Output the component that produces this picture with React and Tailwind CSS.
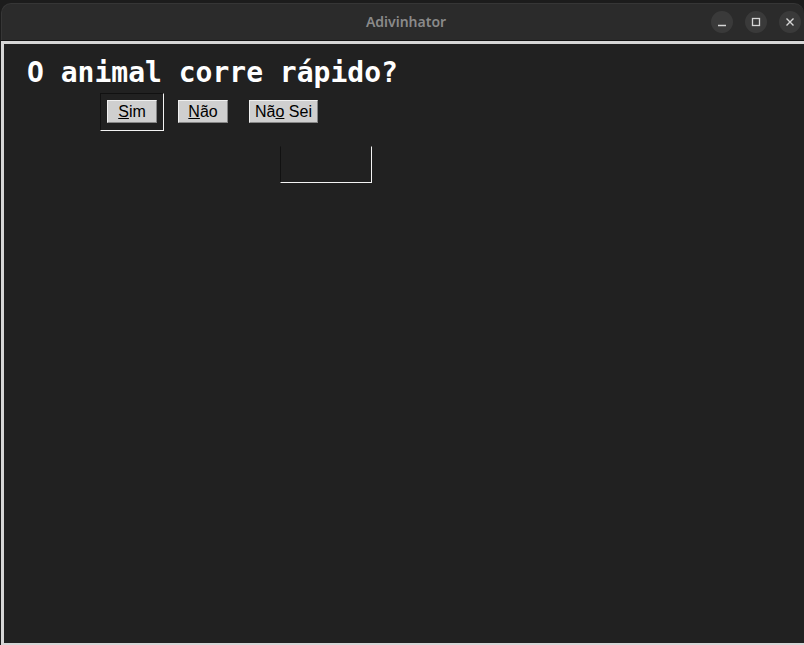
export default function App() {
  return (
    <div className="w-[804px] h-[645px] bg-[#1c1c1c] overflow-hidden flex flex-col">
      {/* Header bar */}
      <div className="mt-[3px] ml-[1px] h-[37px] shrink-0 rounded-t-[10px] bg-[#2b2b2b] border-t border-l border-[#363636] relative flex items-center justify-center">
        <span className="font-['Noto_Sans'] font-semibold text-[14px] text-[#8a8a8a] ml-[6px] -mt-[2px]">Adivinhator</span>
        <div className="absolute right-[3px] top-[7px] flex gap-[12px]">
          <div className="w-[22px] h-[22px] rounded-full bg-[#3a3a3a] flex items-center justify-center">
            <svg width="10" height="10" viewBox="0 0 10 10"><path d="M1 8.5h8" stroke="#d6d6d6" strokeWidth="1.5" /></svg>
          </div>
          <div className="w-[22px] h-[22px] rounded-full bg-[#3a3a3a] flex items-center justify-center">
            <svg width="10" height="10" viewBox="0 0 10 10"><rect x="1.5" y="1.5" width="7" height="7" fill="none" stroke="#d6d6d6" strokeWidth="1.3" /></svg>
          </div>
          <div className="w-[22px] h-[22px] rounded-full bg-[#3a3a3a] flex items-center justify-center">
            <svg width="10" height="10" viewBox="0 0 10 10"><path d="M1.5 1.5l7 7M8.5 1.5l-7 7" stroke="#d6d6d6" strokeWidth="1.4" /></svg>
          </div>
        </div>
      </div>
      <div className="h-[1px] shrink-0 bg-[#151515]" />
      {/* Window content */}
      <div className="ml-[1px] flex-1 border-l-[3px] border-t-[3px] border-b-[2px] border-[#d6d6d6] bg-[#212121] flex flex-col">
        <div className="pt-[13px] pl-[23px] font-['DejaVu_Sans_Mono'] font-bold text-[28px] leading-[32px] text-white">
          O animal corre rápido?
        </div>
        <div className="mt-[4px] ml-[96px] flex items-start font-['Liberation_Sans'] text-[16px] leading-[19px] text-black">
          <div className="w-[64px] h-[38px] border-l border-t border-[#111111] border-r-[#f4f4f4] border-b-[#f4f4f4] border-r border-b pl-[6px] pt-[6px]">
            <div className="w-[50px] h-[23px] bg-[#cfcfcf] border border-t-[#f0f0f0] border-l-[#f0f0f0] border-r-[#868686] border-b-[#868686] flex items-center justify-center">
              <span className="-mt-[1px]"><span className="underline">S</span>im</span>
            </div>
          </div>
          <div className="ml-[14px] mt-[7px] w-[50px] h-[23px] bg-[#cfcfcf] border border-t-[#f0f0f0] border-l-[#f0f0f0] border-r-[#868686] border-b-[#868686] flex items-center justify-center">
            <span className="-mt-[1px]"><span className="underline">N</span>ão</span>
          </div>
          <div className="ml-[21px] mt-[7px] w-[69px] h-[23px] bg-[#cfcfcf] border border-t-[#f0f0f0] border-l-[#f0f0f0] border-r-[#868686] border-b-[#868686] flex items-center justify-center">
            <span className="-mt-[1px]">Nã<span className="underline">o</span> Sei</span>
          </div>
        </div>
        <div className="mt-[15px] ml-[276px] w-[92px] h-[37px] border-l border-t border-l-[#111111] border-t-[#212121] border-r border-b border-r-[#f4f4f4] border-b-[#f4f4f4]" />
      </div>
    </div>
  );
}
